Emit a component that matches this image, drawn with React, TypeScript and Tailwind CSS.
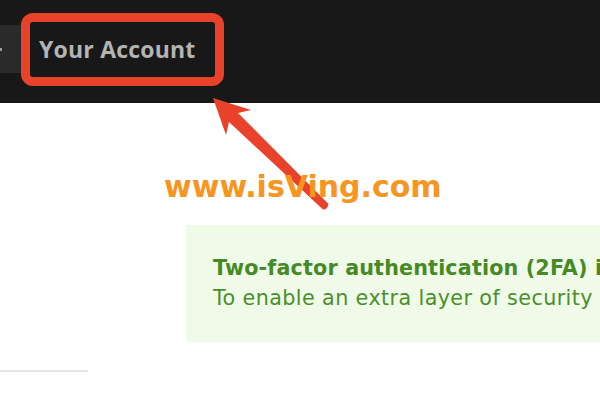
import React from 'react'

function Arrow() {
  return (
    <svg className="pointer-events-none absolute left-0 top-0" width="600" height="400" viewBox="0 0 600 400">
      <path
        d="M213 98 L251 110 L238 113 L328.5 204 Q327.5 209.5 323 209.5 L229 122 L226 135 Z"
        fill="#e8432a"
        strokeLinejoin="round"
      />
    </svg>
  )
}

export default function App() {
  return (
    <div className="relative h-[400px] w-[600px] overflow-hidden bg-white font-['Open_Sans',sans-serif]">
      <header className="flex h-[103px] items-start bg-[#181818]">
        <div className="mt-[25px] flex h-[48px] w-[21px] items-center bg-[#2a2a2a]">
          <span className="block h-[3px] w-[2px] bg-[#9a9a9a]" />
        </div>
        <div className="mt-[13px] flex h-[73px] w-[203px] items-center rounded-[12px] border-[9px] border-[#e8432a] pl-[9px]">
          <span className="text-[23px] font-bold leading-none tracking-[0.2px] text-[#b4b4b4]">Your Account</span>
        </div>
      </header>

      <section className="ml-[186px] mt-[122px] h-[117px] bg-[#f0fae9] pl-[27px] pt-[28px] font-['DejaVu_Sans',sans-serif] text-[20.7px] leading-[30px] whitespace-nowrap text-[#4b8f2a]">
        <p className="font-bold tracking-[0.15px] text-[#468a25]">Two-factor authentication (2FA) is enabled</p>
        <p className="tracking-[0.4px]">To enable an extra layer of security for your account</p>
      </section>

      <div className="mt-[28px] h-[2px] w-[88px] bg-[#e6e6e6]" />

      <Arrow />

      <div className="pointer-events-none absolute left-[164px] top-[172px] font-['DejaVu_Sans',sans-serif] text-[30px] font-bold leading-none text-[#f6951f]">
        www.isVing.com
      </div>
    </div>
  )
}
